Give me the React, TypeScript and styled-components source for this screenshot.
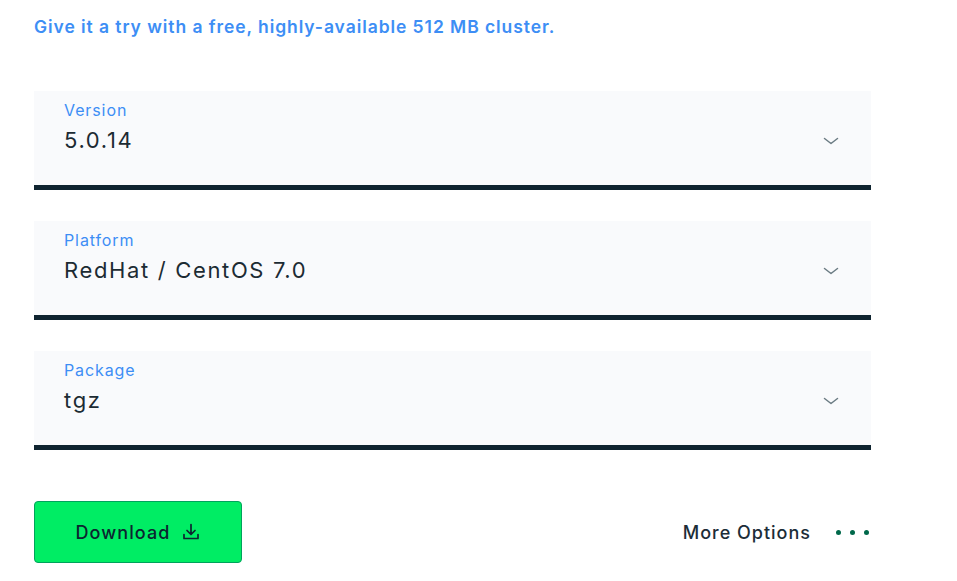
import React from "react";
import styled, { createGlobalStyle } from "styled-components";

const Global = createGlobalStyle`
  html, body { margin: 0; padding: 0; background: #ffffff; }
  body { font-family: Inter, "Open Sans", sans-serif; }
`;

const Page = styled.div`
  width: 957px;
  height: 581px;
  box-sizing: border-box;
  padding: 15px 86px 0 34px;
  display: flex;
  flex-direction: column;
  overflow: hidden;
`;

const Intro = styled.p`
  margin: 0 0 52px 0;
  font-size: 17.5px;
  font-weight: 600;
  color: #3d8ef5;
  line-height: 24px;
  letter-spacing: 0.93px;
`;

const Fields = styled.div`
  display: flex;
  flex-direction: column;
  gap: 31px;
`;

const SelectBox = styled.div`
  height: 94px;
  background: #f9fafc;
  border-bottom: 5px solid #0f2430;
  display: flex;
  align-items: center;
  justify-content: space-between;
  padding: 0 30px;
  box-sizing: content-box;
`;

const FieldText = styled.div`
  display: flex;
  flex-direction: column;
  gap: 7px;
  margin-top: -23px;
`;

const Label = styled.span`
  font-size: 16px;
  color: #3d8ef5;
  line-height: 20px;
  letter-spacing: 0.9px;
`;

const Value = styled.span`
  font-size: 22px;
  color: #1c2b33;
  line-height: 26px;
  letter-spacing: 1.65px;
`;

const Chevron = styled.svg`
  width: 16px;
  height: 16px;
  margin: 6px 2px 0 0;
`;

const Actions = styled.div`
  margin-top: 51px;
  display: flex;
  align-items: center;
  justify-content: space-between;
`;

const DownloadButton = styled.button`
  width: 208px;
  height: 62px;
  box-sizing: border-box;
  background: #00ed64;
  border: 1px solid #00a35c;
  border-radius: 4px;
  display: flex;
  align-items: center;
  justify-content: center;
  gap: 10px;
  font-family: Inter, "Open Sans", sans-serif;
  font-size: 18px;
  font-weight: 500;
  color: #0c2430;
  letter-spacing: 1.1px;
  padding: 0 0 0 0;
`;

const MoreOptions = styled.div`
  display: flex;
  align-items: center;
  gap: 25px;
  font-size: 18px;
  font-weight: 500;
  color: #1c2d38;
  letter-spacing: 1px;
  margin-right: 2px;
`;

const Dots = styled.div`
  display: flex;
  gap: 9px;
`;

const Dot = styled.span`
  width: 5px;
  height: 5px;
  border-radius: 50%;
  background: #00684a;
`;

const ChevronIcon = () => (
  <Chevron viewBox="0 0 16 16" fill="none">
    <path d="M1.5 5.5 L8 10.5 L14.5 5.5" stroke="#6b7b83" strokeWidth="1.5" strokeLinecap="round" strokeLinejoin="round" />
  </Chevron>
);

const DownloadIcon = () => (
  <svg width="20" height="20" viewBox="0 0 20 20" fill="none">
    <path d="M10 2.5 V12 M6 8.5 L10 12.5 L14 8.5" stroke="#0c2430" strokeWidth="1.7" strokeLinecap="round" strokeLinejoin="round" />
    <path d="M3 12.5 V16.5 H17 V12.5" stroke="#0c2430" strokeWidth="1.7" strokeLinecap="round" strokeLinejoin="round" />
  </svg>
);

const fields = [
  { label: "Version", value: "5.0.14" },
  { label: "Platform", value: "RedHat / CentOS 7.0" },
  { label: "Package", value: "tgz" },
];

export default function App() {
  return (
    <>
      <Global />
      <Page>
        <Intro>Give it a try with a free, highly-available 512 MB cluster.</Intro>
        <Fields>
          {fields.map((f) => (
            <SelectBox key={f.label}>
              <FieldText>
                <Label>{f.label}</Label>
                <Value>{f.value}</Value>
              </FieldText>
              <ChevronIcon />
            </SelectBox>
          ))}
        </Fields>
        <Actions>
          <DownloadButton>
            Download <DownloadIcon />
          </DownloadButton>
          <MoreOptions>
            More Options
            <Dots>
              <Dot />
              <Dot />
              <Dot />
            </Dots>
          </MoreOptions>
        </Actions>
      </Page>
    </>
  );
}
